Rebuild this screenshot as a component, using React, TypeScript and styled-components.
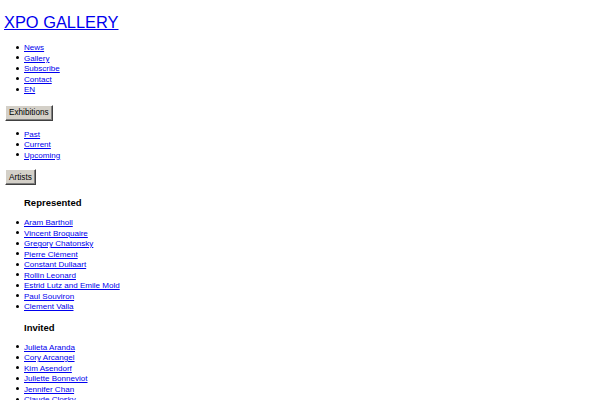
import React from "react";
import styled, { createGlobalStyle } from "styled-components";

const Global = createGlobalStyle`
  html, body { margin: 0; padding: 0; background: #ffffff; }
  body {
    font-family: "Liberation Sans", Arial, Helvetica, sans-serif;
    font-size: 8.05px;
    line-height: 10.5px;
    color: #000000;
  }
  a { color: #0000ee; text-decoration: underline; }
`;

const Page = styled.div`
  padding: 12px 4px 0 4px;
  display: flex;
  flex-direction: column;
  align-items: flex-start;
`;

const Title = styled.h1`
  margin: 0 0 11px 0;
  font-size: 16.4px;
  line-height: 20px;
  font-weight: normal;
  a { color: #0000ee; }
`;

const Item = styled.li`
  list-style: none;
  line-height: 10.5px;
  &::before {
    content: "";
    display: inline-block;
    width: 3px;
    height: 3px;
    border-radius: 50%;
    background: #000000;
    margin-left: -8px;
    margin-right: 5px;
    vertical-align: 1.5px;
  }
`;

const List = styled.ul<{ $after?: number }>`
  margin: 0 0 ${(p) => p.$after ?? 10}px 0;
  padding: 0 0 0 20px;
`;

const Toggle = styled.button`
  margin: 0 0 9px 1px;
  padding: 0 3px;
  height: 16px;
  font-family: "Liberation Sans", Arial, Helvetica, sans-serif;
  font-size: 8.2px;
  font-weight: normal;
  color: #000000;
  background: #d4d0c8;
  border-style: solid;
  border-width: 1px;
  border-color: #ffffff #404040 #404040 #ffffff;
  box-shadow: inset -1px -1px 0 #808080;
`;

const Group = styled.section`
  padding-left: 20px;
  display: flex;
  flex-direction: column;
`;

const GroupTitle = styled.h3<{ $top: number }>`
  margin: ${(p) => p.$top}px 0 9px 0;
  font-size: 9.5px;
  line-height: 12px;
  font-weight: bold;
`;

const SubList = styled.ul`
  margin: 0;
  padding: 0;
`;

const nav = ["News", "Gallery", "Subscribe", "Contact", "EN"];
const exhibitions = ["Past", "Current", "Upcoming"];
const represented = [
  "Aram Bartholl",
  "Vincent Broquaire",
  "Gregory Chatonsky",
  "Pierre Clément",
  "Constant Dullaart",
  "Rollin Leonard",
  "Estrid Lutz and Emile Mold",
  "Paul Souviron",
  "Clement Valla",
];
const invited = [
  "Julieta Aranda",
  "Cory Arcangel",
  "Kim Asendorf",
  "Juliette Bonneviot",
  "Jennifer Chan",
  "Claude Closky",
  "Aaron Koblin",
];

export default function App() {
  return (
    <>
      <Global />
      <Page>
        <Title>
          <a href="#">XPO GALLERY</a>
        </Title>
        <List $after={9}>
          {nav.map((n) => (
            <Item key={n}>
              <a href="#">{n}</a>
            </Item>
          ))}
        </List>
        <Toggle>Exhibitions</Toggle>
        <List $after={8}>
          {exhibitions.map((n) => (
            <Item key={n}>
              <a href="#">{n}</a>
            </Item>
          ))}
        </List>
        <Toggle>Artists</Toggle>
        <Group>
          <GroupTitle $top={3}>Represented</GroupTitle>
          <SubList>
            {represented.map((n) => (
              <Item key={n}>
                <a href="#">{n}</a>
              </Item>
            ))}
          </SubList>
          <GroupTitle $top={9}>Invited</GroupTitle>
          <SubList>
            {invited.map((n) => (
              <Item key={n}>
                <a href="#">{n}</a>
              </Item>
            ))}
          </SubList>
        </Group>
      </Page>
    </>
  );
}
